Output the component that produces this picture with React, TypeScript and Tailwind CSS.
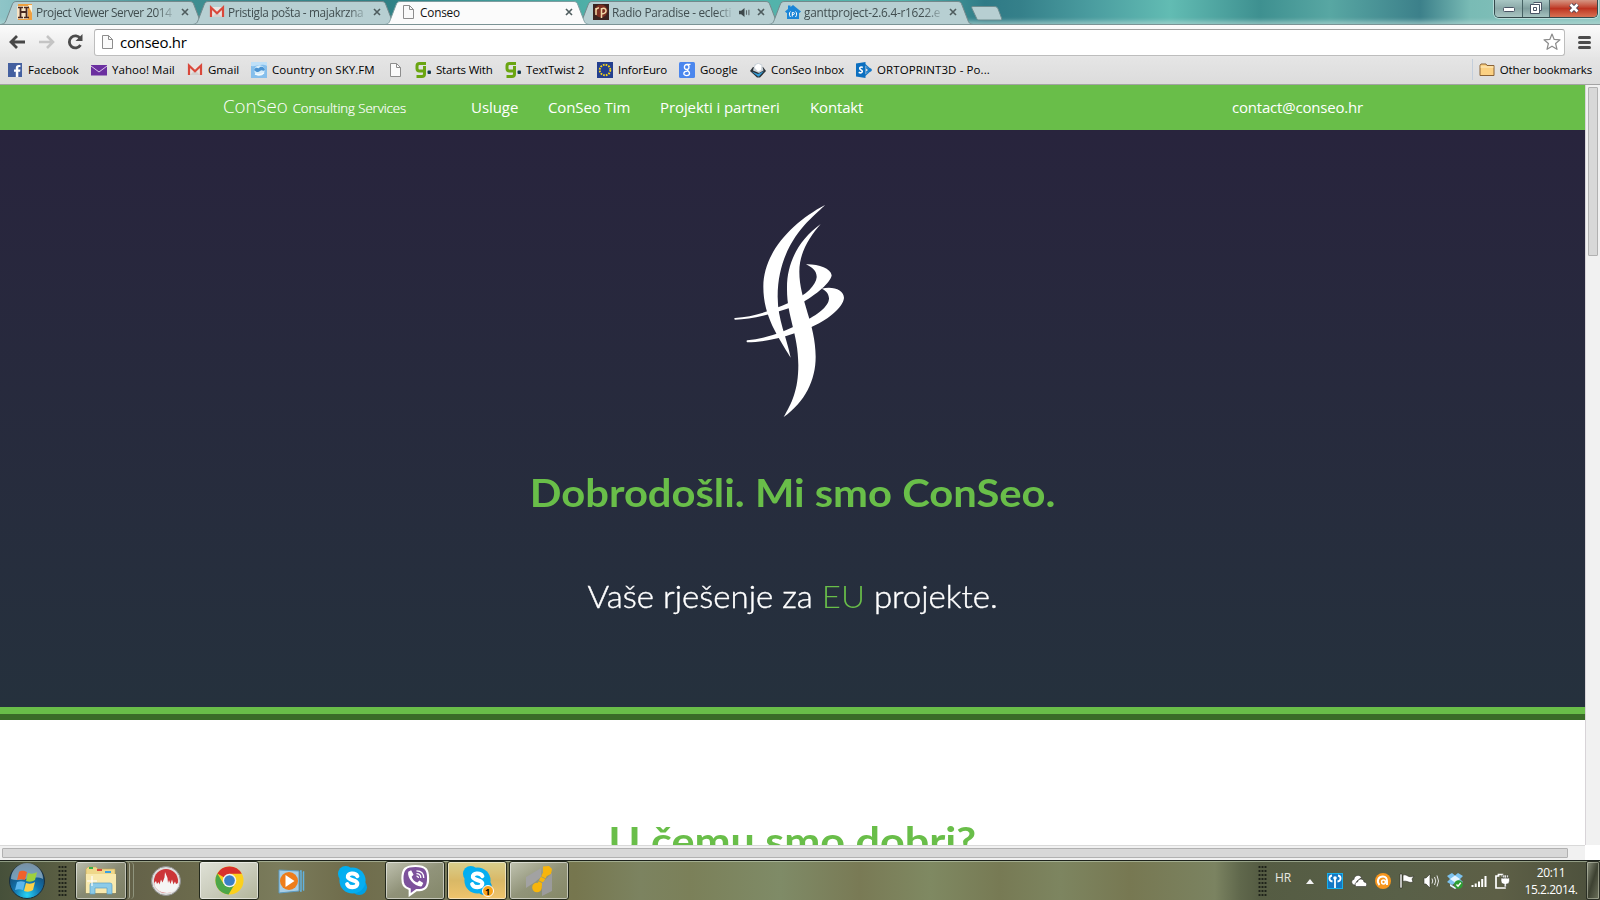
import type { ReactNode } from "react";

const UI = "font-['Open_Sans','Noto_Sans',sans-serif]";

/* ---------- small icons ---------- */

const PageIcon = ({ className = "" }: { className?: string }) => (
  <svg viewBox="0 0 16 16" className={`h-4 w-4 shrink-0 ${className}`}>
    <path d="M2.5 1.5h6l4 4v9h-10z" fill="#fafafa" stroke="#8d8d8d" />
    <path d="M8.500 1.500v4h4" fill="none" stroke="#8d8d8d" />
  </svg>
);

const GmailIcon = () => (
  <svg viewBox="0 0 16 16" className="h-4 w-4 shrink-0">
    <path d="M2 3h12v10H2z" fill="#e9e4e2" />
    <path d="M3 13l5-5 5 5z" fill="#d4d0ce" />
    <path d="M2 13V3.500l6 5.700 6-5.700V13" fill="none" stroke="#d9483b" strokeWidth="2.200" />
  </svg>
);

const ProjectIcon = () => (
  <svg viewBox="0 0 16 16" className="h-4 w-4 shrink-0">
    <rect x="1" width="14" height="16" fill="#f0a040" />
    <path d="M0 2h11v13H0z" fill="#f7e3c5" />
    <path d="M11 1l4 0v8z" fill="#fff3d8" />
    <path d="M1 3.500h5M7 3.500h5M1 13.500h5M7 13.500h5" stroke="#4a2a22" strokeWidth="1.300" />
    <path d="M3.500 3v10M9.500 3v10M3.500 8h6" stroke="#4a2a22" strokeWidth="1.800" fill="none" />
  </svg>
);

const RadioIcon = () => (
  <svg viewBox="0 0 16 16" className="h-4 w-4 shrink-0">
    <rect width="16" height="16" fill="#3a2320" />
    <circle cx="8" cy="7" r="6.500" fill="#7c2f22" />
    <path d="M3 11V4M3 6c.5-2 1.500-2.300 3-2M8.500 14V4M8.500 5c5-3 7 5 0 5" fill="none" stroke="#f0d9a8" strokeWidth="1.500" />
  </svg>
);

const GanttHouse = () => (
  <svg viewBox="0 0 16 16" className="h-4 w-4 shrink-0">
    <path d="M0 7.500L3 5V1.500h2.500V3L8 1l8 6.500-1.500 1.500-.5-.3V15H2V8.700L1.500 9z" fill="#1a86d8" />
    <path d="M5.500 7.500c-1.500 1-1.500 4 0 5.500M10.500 7.500c1.500 1 1.500 4 0 5.500M7.300 12.500V8.500h1c1.500 0 1.500 2 0 2h-1" fill="none" stroke="#fff" strokeWidth="1" />
  </svg>
);

const FacebookIcon = () => (
  <svg viewBox="0 0 16 16" className="h-4 w-4 shrink-0">
    <rect x="1" y="1" width="14" height="14" fill="#4460a0" />
    <path d="M8.800 15V9.700H7V7.400h1.800V6c0-2 1.100-3.100 3-3.100h1.600v2.200h-1.100c-.8 0-1 .4-1 1.100v1.200h2.100l-.3 2.300h-1.800V15z" fill="#fff" />
  </svg>
);

const YahooIcon = () => (
  <svg viewBox="0 0 16 16" className="h-4 w-4 shrink-0">
    <path d="M0 3h16v10.500H0z" fill="#6b2fa0" />
    <path d="M0 4l8 6 8-6" fill="none" stroke="#d9c6ea" />
  </svg>
);

const SkyIcon = () => (
  <svg viewBox="0 0 16 16" className="h-4 w-4 shrink-0">
    <rect width="16" height="16" fill="#86bfec" />
    <path d="M0 0h16v4C10 1 5 5 0 4z" fill="#bfe0f8" />
    <circle cx="8.500" cy="8.500" r="5.200" fill="#d5ecfa" />
    <path d="M3 8c2-4 4-1 5-2s3-2 5 0l1 2c-2 2-3-1-5 1s-4 1-6-1z" fill="#4b93d2" />
    <path d="M4 12c3 1 6 1 9-1" stroke="#f4fbff" strokeWidth="1.500" fill="none" />
  </svg>
);

const GameIcon = () => (
  <svg viewBox="0 0 16 16" className="h-4 w-4 shrink-0">
    <path d="M11 1.500H4.500C2.500 1.500 2 2.500 2 4v2.500C2 8.500 3 9 4.500 9H9" fill="none" stroke="#6aa512" strokeWidth="3" />
    <path d="M9.500 4V12c0 1.500-1 2.500-2.500 2.500H1.500" fill="none" stroke="#6aa512" strokeWidth="3" />
    <rect x="12.500" y="8.500" width="3.500" height="3.500" rx="1" fill="#173a52" />
  </svg>
);

const EuIcon = () => (
  <svg viewBox="0 0 16 16" className="h-4 w-4 shrink-0">
    <rect width="16" height="16" fill="#233f8f" />
    <circle cx="8" cy="8" r="5.300" fill="none" stroke="#f2d21b" strokeWidth="1.900" strokeDasharray="1.700 1.075" />
  </svg>
);

const GoogleIcon = () => (
  <svg viewBox="0 0 16 16" className="h-4 w-4 shrink-0">
    <rect width="16" height="16" rx="1.500" fill="#4a86ee" />
    <ellipse cx="7.700" cy="5" rx="2.300" ry="2.500" fill="none" stroke="#fff" strokeWidth="1.300" />
    <path d="M8 2.300h3.500M9 7.200c-2 1.300 1.500 1.800 1.500 4 0 3.200-5.700 3-5.700.3 0-1.700 2-2.200 3.700-2.300" fill="none" stroke="#fff" strokeWidth="1.300" />
  </svg>
);

const InboxIcon = () => (
  <svg viewBox="0 0 16 16" className="h-4 w-4 shrink-0">
    <path d="M0 9l3-4h10l3 4-6 6.500H7z" fill="#2b3238" />
    <path d="M1.500 9.500L8 12l6-3-5 5.500H8z" fill="#2f9bd8" />
    <path d="M3 8.500l1.500-6L8 .8l4 1.700 1.500 6L9 11z" fill="#c9d1d8" />
    <path d="M4.500 5.500L6 2.700l2.500-1 3 1.800-.5 4.500-3 1.500z" fill="#fff" />
  </svg>
);

const SharepointIcon = () => (
  <svg viewBox="0 0 16 16" className="h-4 w-4 shrink-0">
    <path d="M9 2.500l6 5.500-6 5.500M10 5.500L13 8l-3 2.500" fill="none" stroke="#1579c8" strokeWidth="1.300" />
    <circle cx="14" cy="8" r="1.700" fill="#1579c8" />
    <path d="M0 1.500L9.500 0v16L0 14.500z" fill="#0b6fc0" />
    <path d="M6.800 5.500C4.500 4 2.500 6.500 4.700 7.700c3 1.300 1.300 4.300-2 2.500" fill="none" stroke="#fff" strokeWidth="1.600" />
  </svg>
);

const FolderIcon = () => (
  <svg viewBox="0 0 16 16" className="h-4 w-4 shrink-0">
    <path d="M1 13.500v-10l1-1.500h5l1 1.500h7v10z" fill="#fbd183" stroke="#8a6235" />
    <path d="M1.500 5h13" stroke="#ffeec4" />
  </svg>
);

const CloseX = () => (
  <svg viewBox="0 0 8 8" className="h-2 w-2 shrink-0">
    <path d="M1 1l6 6M7 1L1 7" stroke="#4e5c5e" strokeWidth="1.600" />
  </svg>
);

const Speaker = () => (
  <svg viewBox="0 0 10 8" className="mr-[7px] h-[9px] w-[11px] shrink-0">
    <path d="M0 2.500h2L5 0v8L2 5.500H0z" fill="#3d484a" />
    <path d="M6.800 2v4M9 1.500v5" stroke="#5d696b" />
  </svg>
);

/* ---------- browser chrome ---------- */

type TabProps = { icon: ReactNode; title: string; active?: boolean; audio?: boolean; track: string };

const Tab = ({ icon, title, active, audio, track }: TabProps) => (
  <div className={`relative -mr-[14px] flex h-[25px] w-[206px] shrink-0 items-center pl-[17px] pr-[17px] ${active ? "z-10" : ""}`}>
    <svg viewBox="0 0 206 25" className="absolute inset-0 h-[25px] w-[206px]">
      <path
        d="M1 24.500C5 24 5.500 22 7 18L12 5C13.200 2 14 1.500 17 1.500H189C192 1.500 193 2 194 5L199 18C200.500 22 201 24 205 24.500"
        fill={active ? "#fbfbfb" : "#b7cfd2"}
        stroke={active ? "#7e9da0" : "#73898c"}
      />
      {active && <path d="M1 25h205" stroke="#fbfbfb" strokeWidth="1.500" />}
    </svg>
    <div className="relative flex w-full items-center pb-px">
      {icon}
      <span
        className={`ml-[3px] flex-1 whitespace-nowrap text-[11.8px] leading-[17px] ${track} ${
          active ? "text-[#111]" : "text-[#414e50] [mask-image:linear-gradient(to_right,black_87%,rgba(0,0,0,0.15))]"
        } mr-[7px]`}
      >
        {title}
      </span>
      {audio && <Speaker />}
      <CloseX />
    </div>
  </div>
);

const WindowButtons = () => (
  <div className="ml-auto mr-[2px] flex h-[18px] shrink-0 overflow-hidden rounded-b-[5px] border border-t-0 border-[#34494c] shadow-[0_0_0_1px_rgba(220,240,240,0.6)]">
    <div className="flex w-[28px] items-center justify-center border-r border-[#466264] bg-linear-to-b from-[#a8c6c4] via-[#8ba9a8] via-50% to-[#aac5c2]">
      <svg viewBox="0 0 12 12" className="h-3 w-3"><rect x=".5" y="4.500" width="11" height="4" rx="1" fill="#fff" stroke="#4a5566" /></svg>
    </div>
    <div className="flex w-[27px] items-center justify-center border-r border-[#466264] bg-linear-to-b from-[#a8c6c4] via-[#809e9e] via-50% to-[#a5c2bf] pb-[2px]">
      <svg viewBox="0 0 12 12" className="h-3 w-3">
        <path d="M3.500.5h8v8h-2" fill="#fff" stroke="#4a5566" />
        <path d="M.5 2.500h9v9h-9zM3.500 5.500h3v3h-3z" fill="#fff" stroke="#4a5566" />
      </svg>
    </div>
    <div className="flex w-[47px] items-center justify-center bg-linear-to-b from-[#d59583] via-[#bd3320] via-50% to-[#d77052] pb-[2px]">
      <svg viewBox="0 0 12 12" className="h-3 w-3">
        <path d="M2.500 2.500l7 7M9.500 2.500l-7 7" stroke="#4b4454" strokeWidth="4.500" />
        <path d="M2.500 2.500l7 7M9.500 2.500l-7 7" stroke="#fff" strokeWidth="2.600" />
      </svg>
    </div>
  </div>
);

const TabStrip = () => (
  <div className="flex h-[25px] overflow-hidden border-b border-[#7b9395] bg-[linear-gradient(90deg,#8fc5c8_0px,#3f8f92_180px,#2f7f84_380px,#4fb0a8_590px,#55b5ad_900px,#2f7a86_985px,#35808a_1020px,#4a9c9f_1090px,#62bcb3_1170px,#3e9090_1260px,#58a7a3_1330px,#3c808a_1420px,#79bbb5_1470px,#8ec7c0_1600px)] shadow-[inset_0_-6px_4px_-3px_rgba(180,215,212,0.65)]">
    <Tab icon={<ProjectIcon />} title="Project Viewer Server 2014" track="tracking-[-0.45px]" />
    <Tab icon={<GmailIcon />} title="Pristigla pošta - majakrzna" track="tracking-[-0.35px]" />
    <Tab icon={<PageIcon />} title="Conseo" active track="tracking-[-0.2px]" />
    <Tab icon={<RadioIcon />} title="Radio Paradise - eclecti" audio track="tracking-[-0.3px]" />
    <Tab icon={<GanttHouse />} title="ganttproject-2.6.4-r1622.e" track="tracking-[-0.25px]" />
    <svg viewBox="0 0 32 16" className="ml-[11px] mt-[5px] h-4 w-8 shrink-0">
      <path d="M1 1.500h22c3 0 3.500 1 4.500 3.500l3 8c.5 1.500 0 2-1 2H9c-2.500 0-3-.5-4-3L1 3.500c-.5-1 0-2 0-2z" fill="#b7cfd2" stroke="#6d8c8f" />
    </svg>
    <WindowButtons />
  </div>
);

const Toolbar = () => (
  <div className="flex h-[32px] items-center bg-linear-to-b from-[#fbfbfb] to-[#e6e6e6] pl-[9px]">
    <svg viewBox="0 0 16 14" className="mt-[2px] h-[14px] w-4">
      <path d="M8 1L2 7l6 6M2 7h14" fill="none" stroke="#474747" strokeWidth="2.800" />
    </svg>
    <svg viewBox="0 0 16 14" className="ml-[14px] mt-[2px] h-[14px] w-4">
      <path d="M8 1l6 6-6 6M14 7H0" fill="none" stroke="#c4c4c4" strokeWidth="2.600" />
    </svg>
    <svg viewBox="0 0 16 16" className="ml-[12px] mt-[2px] h-4 w-4">
      <path d="M13.300 4.500A6 6 0 1 0 13.500 11" fill="none" stroke="#4b4b4b" strokeWidth="2.800" />
      <path d="M15.500 0v7h-7z" fill="#4b4b4b" />
    </svg>
    <div className="ml-[11px] mt-[2px] flex h-[27px] w-[1471px] items-center rounded-[3px] border border-[#bdbdbd] border-t-[#a0a0a0] bg-white pl-[5px] pr-[3px]">
      <PageIcon />
      <span className="ml-[4px] flex-1 text-[15px] leading-5 tracking-[-0.3px] text-black">conseo.hr</span>
      <svg viewBox="0 0 18 18" className="h-[18px] w-[18px]">
        <path d="M9 1l2.200 5.400 5.800.4-4.400 3.700 1.400 5.800L9 13.200l-5 3.100 1.400-5.800L1 6.800l5.800-.4z" fill="#fff" stroke="#8b8b8b" strokeWidth="1.200" strokeLinejoin="round" />
      </svg>
    </div>
    <div className="ml-[13px] mt-[2px] flex flex-col gap-[2px]">
      <div className="h-[3px] w-[13px] rounded-sm bg-[#4c4c4c]" />
      <div className="h-[3px] w-[13px] rounded-sm bg-[#4c4c4c]" />
      <div className="h-[3px] w-[13px] rounded-sm bg-[#4c4c4c]" />
    </div>
  </div>
);

const bookmarks: { icon: ReactNode; label: string; box: string }[] = [
  { icon: <FacebookIcon />, label: "Facebook", box: "w-[84px] tracking-[-0.05px]" },
  { icon: <YahooIcon />, label: "Yahoo! Mail", box: "w-[96px] tracking-[0.05px]" },
  { icon: <GmailIcon />, label: "Gmail", box: "w-[64px] tracking-[0px]" },
  { icon: <SkyIcon />, label: "Country on SKY.FM", box: "w-[137px] tracking-[0.05px]" },
  { icon: <PageIcon />, label: "", box: "w-[27px]" },
  { icon: <GameIcon />, label: "Starts With", box: "w-[90px] tracking-[-0.2px]" },
  { icon: <GameIcon />, label: "TextTwist 2", box: "w-[92px] tracking-[-0.2px]" },
  { icon: <EuIcon />, label: "InforEuro", box: "w-[82px] tracking-[-0.2px]" },
  { icon: <GoogleIcon />, label: "Google", box: "w-[71px] tracking-[0px]" },
  { icon: <InboxIcon />, label: "ConSeo Inbox", box: "w-[106px] tracking-[-0.1px]" },
  { icon: <SharepointIcon />, label: "ORTOPRINT3D - Po...", box: "w-[150px] tracking-[0.1px]" },
];

const BookmarksBar = () => (
  <div className="flex h-[28px] items-center border-b border-[#a3a3a3] bg-linear-to-b from-[#e5e5e5] to-[#dcdcdc] pb-[2px] pl-[7px] text-[11.5px] text-black">
    {bookmarks.map((b, i) => (
      <div key={i} className={`flex shrink-0 items-center gap-[5px] whitespace-nowrap ${b.box}`}>
        {b.icon}
        <span>{b.label}</span>
      </div>
    ))}
    <div className="ml-auto mr-[8px] flex items-center gap-[5px] border-l border-[#c3cedb] py-[2px] pl-[6px] tracking-[-0.15px]">
      <FolderIcon />
      <span>Other bookmarks</span>
    </div>
  </div>
);

/* ---------- web page ---------- */

const ConseoLogo = () => (
  <svg viewBox="0 0 480 720" className="mr-[5px] h-[240px] w-[160px]" fill="#fff">
    <path d="M345 45C318 75 203 150 203 320C203 390 230 440 242 503C205 440 160 380 160 290C160 185 250 95 345 45Z" />
    <path d="M332 102C300 140 268 185 268 245C268 330 317 400 317 500C317 570 285 635 221 681C245 640 265 600 265 525C265 430 230 380 231 295C230 220 265 150 332 102Z" />
    <path d="M288 223C325 222 362 235 365 256C362 278 320 314 270 342C210 366 130 389 75 389C72 389 72 384 75 384C130 380 180 364 240 337C290 315 318 285 320 262C321 245 308 232 288 223Z" />
    <path d="M335 296C370 288 402 300 402 324C398 355 350 392 300 413C240 437 170 457 112 457C109 457 109 451 112 451C170 446 230 422 280 396C320 376 357 350 357 325C356 308 345 300 335 296Z" />
  </svg>
);

const SiteNav = () => (
  <nav className="flex h-[45px] shrink-0 items-center whitespace-nowrap bg-[#69be49] pl-[223px] text-[15px] tracking-[-0.05px] text-white">
    <div className="flex w-[248px] items-baseline gap-[5px] pb-[2px] font-light">
      <span className="text-[18.7px]">ConSeo</span>
      <span className="text-[13.2px] [-webkit-text-stroke:0.2px]">Consulting Services</span>
    </div>
    <a className="w-[77px]">Usluge</a>
    <a className="w-[112px] tracking-[-0.1px]">ConSeo Tim</a>
    <a className="w-[150px] tracking-[-0.1px]">Projekti i partneri</a>
    <a className="w-[422px] tracking-[-0.15px]">Kontakt</a>
    <a className="tracking-[-0.2px]">contact@conseo.hr</a>
  </nav>
);

const Site = () => (
  <div className="flex h-[760px] w-[1585px] flex-col overflow-hidden bg-white">
    <SiteNav />
    <header className="flex h-[577px] shrink-0 flex-col items-center bg-linear-to-b from-[#28243d] to-[#25313d] pt-[60px] font-['Century_Gothic','Lato',sans-serif]">
      <ConseoLogo />
      <h1 className="mt-[37px] origin-center scale-x-[1.07] whitespace-nowrap text-[39px] font-bold leading-[50px] text-[#69be49]">
        Dobrodošli. Mi smo ConSeo.
      </h1>
      <p className="mt-[59px] origin-center scale-x-[1.065] whitespace-nowrap text-[31px] font-light leading-[40px] text-white [-webkit-text-stroke:0.4px]">
        Vaše rješenje za <span className="text-[#69be49] [-webkit-text-stroke:0px]">EU</span> projekte.
      </p>
    </header>
    <div className="h-[7px] shrink-0 bg-[#69be49]" />
    <div className="h-[6px] shrink-0 bg-[#3a6c28]" />
    <section className="flex justify-center pt-[95px] font-['Century_Gothic','Lato',sans-serif]">
      <h2 className="origin-center scale-x-[1.105] whitespace-nowrap text-[39px] font-bold leading-[50px] text-[#69be49]">U čemu smo dobri?</h2>
    </section>
  </div>
);

/* ---------- taskbar ---------- */

const Grip = () => (
  <div className="h-[31px] w-[9px] shrink-0 bg-[radial-gradient(circle,#1e2219_0.9px,transparent_1.3px)] bg-[size:3px_4px]" />
);

const StartOrb = () => (
  <svg viewBox="0 0 38 38" className="h-[38px] w-[38px] shrink-0">
    <defs>
      <radialGradient id="orb" cx=".5" cy=".9" r=".85">
        <stop offset="0" stopColor="#27d3f4" />
        <stop offset=".45" stopColor="#1273ad" />
        <stop offset="1" stopColor="#173c60" />
      </radialGradient>
    </defs>
    <circle cx="19" cy="19" r="17.500" fill="url(#orb)" stroke="#1b2f3c" />
    <path d="M3 17A16 16 0 0 1 35 17C26 12 12 21 3 17Z" fill="#b9cfdc" opacity=".6" />
    <path d="M11 10c3-2 5-1 8 0l-2 8c-3-1-5-1-8 0z" fill="#f0622b" />
    <path d="M20 11c3 1 6 1 9-1l-2 8c-3 2-6 2-9 1z" fill="#9ed03d" />
    <path d="M9 20c3-1 5-1 8 0l-2 8c-3-1-5-1-8 0z" fill="#5bb6ee" />
    <path d="M18 21c3 1 6 1 9-1l-2 8c-3 2-6 2-9 1z" fill="#fcd04a" />
  </svg>
);

const ExplorerIcon = () => (
  <svg viewBox="0 0 32 30" className="h-[30px] w-8">
    <path d="M1 3l2-2h8l2 2h17v24H1z" fill="#efd88a" stroke="#c8a850" strokeWidth=".6" />
    <rect x="4" y="1" width="4" height="2" fill="#35b04a" />
    <rect x="12" y="3" width="5" height="2" fill="#d84a3a" />
    <rect x="20" y="5" width="6" height="2" fill="#3aa0e0" />
    <path d="M1 8h30v19H1z" fill="#f8e9ae" />
    <path d="M5 28V19q0-2 2-2h18q2 0 2 2v9h-5v-6H10v6z" fill="#8ccbe8" stroke="#5a9fc4" strokeWidth=".7" />
    <path d="M7 10v10M2 15h10" stroke="#fff" strokeWidth="1.200" />
  </svg>
);

const FlameIcon = () => (
  <svg viewBox="0 0 32 32" className="h-8 w-8">
    <circle cx="16" cy="16" r="14.500" fill="#dedede" stroke="#8f8f8f" />
    <circle cx="16" cy="16" r="12" fill="#cc3438" />
    <path d="M4.300 18l1.700-2 1 3 1.500-2 1 2.500 1.500-5 1.500 3 2-5 .5-5.500 2.500 6 .5 5 1-3 1.500 4 1.500-4.500 1.500 5 1.500-3 1 2.500 2.500-1c0 6-5 10-11.500 10S4.300 24 4.300 18z" fill="#f5f5f5" />
  </svg>
);

const ChromeIcon = () => (
  <svg viewBox="0 0 32 32" className="h-[31px] w-[31px]">
    <circle cx="16" cy="16" r="14.500" fill="#fbd01d" />
    <path d="M16 16L3.400 8.800A14.500 14.500 0 0 1 28.600 9H16z" fill="#d8302c" />
    <path d="M3.400 8.800A14.500 14.500 0 0 0 15 30.500L21.500 19.500 10 19.500z" fill="#4da648" />
    <circle cx="16" cy="16" r="7" fill="#f2f2f2" />
    <circle cx="16" cy="16" r="5.500" fill="#3a7fc6" />
  </svg>
);

const PlayerIcon = () => (
  <svg viewBox="0 0 28 28" className="h-7 w-7">
    <path d="M2 3l20 1v20L2 26z" fill="#a9cfe6" stroke="#5d9cc2" />
    <path d="M23 4h1v20h-1M26 5h.5v18H26" stroke="#62b2e0" fill="none" strokeWidth="1.500" />
    <circle cx="12" cy="14" r="9" fill="#ee7d1b" />
    <path d="M8.500 8l9 6-9 6z" fill="#fff" />
  </svg>
);

const SkypeIcon = ({ badge }: { badge?: boolean }) => (
  <div className="relative h-[31px] w-[31px]">
    <svg viewBox="0 0 32 32" className="h-[31px] w-[31px]">
      <circle cx="9" cy="9" r="8" fill="#00aff0" />
      <circle cx="23" cy="23" r="8" fill="#00a0e4" />
      <circle cx="16" cy="16" r="13.500" fill="#06aef0" />
      <path d="M21 11.500C19 7.500 10.500 8 11.200 12.500c1 4 10.300 2.500 9.800 7-.5 4.500-9 4.300-10.500.3" fill="none" stroke="#fff" strokeWidth="4.200" strokeLinecap="round" />
    </svg>
    {badge && (
      <span className="absolute -bottom-[1px] -right-[1px] flex h-[12px] w-[12px] items-center justify-center rounded-full border border-white bg-[#f8a31a] text-[9px] font-bold leading-none text-black">
        1
      </span>
    )}
  </div>
);

const ViberIcon = () => (
  <svg viewBox="0 0 32 34" className="h-[33px] w-[31px]">
    <path d="M16 2c11 0 13 4 13 13s-3 12-12 12l-7 5v-6C4 24 2.500 21 2.500 15 2.500 5 6 2 16 2z" fill="#7d529c" stroke="#fff" strokeWidth="2.200" />
    <path d="M8.500 8l3-1.500L14 11l-2 2c1 3 3 5 6 6l2-2 4 2.500-1.500 3.500C16 24 7 15 8.500 8z" fill="#fff" />
    <path d="M17 7c5 0 7.500 3 7.500 7.500M17 10c3 0 4.500 1.500 4.500 4.500M17 12.500q2 0 2 2" fill="none" stroke="#fff" strokeWidth="1.300" />
  </svg>
);

const GanttIcon = () => (
  <svg viewBox="0 0 30 32" className="h-8 w-[30px]">
    <path d="M2 12L17 3v9l-6 5-9 6z" fill="#a2a2a2" />
    <path d="M22.500 6L14 23" stroke="#f7b50c" strokeWidth="5" strokeDasharray="7 .8 4 .8 7" />
    <path d="M19 1.500l6-.5 3 3-1 5-4 2-4-4z" fill="#f7b50c" />
    <circle cx="13" cy="22.500" r="4.800" fill="#f7b50c" />
    <path d="M18 18l10-10v18l-10 5z" fill="#9b9b9b" />
  </svg>
);

const TaskButton = ({ children, look }: { children: ReactNode; look: string }) => (
  <div className={`flex h-[39px] shrink-0 items-center justify-center rounded-[3px] border border-[#23291c] shadow-[inset_0_0_0_1px_rgba(255,255,255,0.5)] ${look}`}>
    {children}
  </div>
);

const trayIcons: ReactNode[] = [
  <svg key="net" viewBox="0 0 16 16" className="h-4 w-4">
    <rect x=".5" y=".5" width="15" height="15" fill="#1478c4" stroke="#18b0ea" />
    <circle cx="8" cy="5" r="1.800" fill="#fff" />
    <path d="M8 6v9M5.500 8.500C1.500 8 1.500 3 5 2.500M10.500 8.500c4-.5 4-5.500.5-6" fill="none" stroke="#fff" strokeWidth="1.800" />
  </svg>,
  <svg key="cloud" viewBox="0 0 16 16" className="h-4 w-4">
    <path d="M1.500 11C0 9 1 6.500 3 6.500 3 2 9 1 10.500 4.500L6 8l-2 4H3z" fill="#fff" stroke="#333" strokeWidth=".5" />
    <path d="M5.500 13.500c-2.300-1-1.500-4.500 1-4.500C7.500 5 12.500 5 13 9c3 0 3.500 3.500 1.500 4.500z" fill="#fff" stroke="#333" strokeWidth=".6" />
  </svg>,
  <svg key="avast" viewBox="0 0 16 16" className="h-4 w-4">
    <circle cx="8" cy="8" r="8" fill="#f8961d" />
    <path d="M4.500 12C1 8 3.500 3.500 8 3.500c3 0 4 2 4 4.500v4" fill="none" stroke="#fff" strokeWidth="1.900" />
    <circle cx="8.500" cy="9" r="1.900" fill="none" stroke="#fff" strokeWidth="1.500" />
  </svg>,
  <svg key="flag" viewBox="0 0 16 16" className="h-4 w-4">
    <path d="M1 1h2v14H1zM4 2c3-1 4 1 6 1.500s3 0 5-.5l-2 3 1 3c-3 1-4 0-6-.5S6 8 4 8.500z" fill="#fff" stroke="#2c2c24" strokeWidth=".6" />
  </svg>,
  <svg key="vol" viewBox="0 0 16 16" className="h-4 w-4">
    <path d="M1 5h2l4-4v14l-4-4H1z" fill="#fff" stroke="#33352c" strokeWidth=".6" />
    <path d="M9 5.500q1.500 2.500 0 5M11.500 4q2.500 4 0 8M14 2.500q3 5.500 0 11" fill="none" stroke="#e8e8e8" />
  </svg>,
  <svg key="dropbox" viewBox="0 0 16 16" className="h-4 w-4">
    <path d="M0 3l5-3 3 2.500L11 0l5 3-3 3 3 3-5 3-3-2-3 2-5-3 3-3z" fill="#7cc2ee" />
    <path d="M3 6l5-3.500L13 6 8 9.500zM3 11l5 3 5-3v2l-5 3-5-3z" fill="#e4f4ff" />
    <circle cx="11.500" cy="11.500" r="4.300" fill="#2d9e33" />
    <path d="M9.500 11.500l1.500 1.700 2.800-3.500" stroke="#fff" strokeWidth="1.400" fill="none" />
  </svg>,
  <svg key="signal" viewBox="0 0 16 16" className="h-4 w-4">
    <path d="M.5 12h2v2h-2zM3.700 10.500h2V14h-2zM7 8.500h2V14H7zM10.200 6h2v8h-2zM13.500 3h2v11h-2z" fill="#fff" />
  </svg>,
  <svg key="power" viewBox="0 0 16 16" className="h-4 w-4">
    <path d="M1 3h2.500V1.500h4V3H10v12H1z" fill="none" stroke="#fff" strokeWidth="1.700" />
    <path d="M6 5h8.500v2.500c0 3-2 3.500-3.200 3.500v3h-2v-3C8 11 6 10.500 6 7.500zM7.500 2h1.700v3H7.500zM11.500 2h1.700v3h-1.700z" fill="#fff" stroke="#44463a" strokeWidth=".6" />
  </svg>,
];

const glass = "bg-linear-to-br from-[#d3d6c8]/80 via-[#a3a792]/60 to-[#8e9376]/60";

const Taskbar = () => (
  <div className="flex h-[40px] shrink-0 items-center overflow-hidden border-t border-[#1d221c] bg-[linear-gradient(90deg,#46503a_0px,#5a5e43_60px,#646249_130px,#6b6a4c_190px,#7b7c5c_280px,#6f6c4b_350px,#77795a_460px,#76764e_575px,#7c8360_640px,#7b8059_690px,#7f8b67_780px,#797a55_860px,#7f8962_930px,#777a54_1000px,#7d8560_1060px,#777852_1130px,#7b8361_1215px,#60684c_1240px,#555c43_1260px,#596048_1400px,#5d5f46_1500px,#4c503c_1600px)] pl-[8px] shadow-[inset_0_1px_0_rgba(190,205,180,0.6)]">
    <StartOrb />
    <div className="ml-[12px] flex"><Grip /></div>
    <TaskButton look={`ml-[8px] w-[52px] ${glass}`}><ExplorerIcon /></TaskButton>
    <div className="h-[37px] w-[3px] rounded-r border-r border-[#a9ad99]" />
    <div className="h-[37px] w-[4px] rounded-r border-r border-[#8f947d]" />
    <div className="ml-[16px] w-8"><FlameIcon /></div>
    <TaskButton look="ml-[17px] w-[60px] bg-linear-to-br from-[#dfe1d6] via-[#cbcdbd] to-[#b2b599]"><ChromeIcon /></TaskButton>
    <div className="ml-[18px] w-[28px]"><PlayerIcon /></div>
    <div className="ml-[32px] w-[31px]"><SkypeIcon /></div>
    <TaskButton look={`ml-[17px] w-[60px] ${glass}`}><ViberIcon /></TaskButton>
    <TaskButton look="ml-[2px] w-[60px] bg-linear-to-b from-[#d9cf8c] via-[#d9b866] to-[#efc46c]"><SkypeIcon badge /></TaskButton>
    <TaskButton look={`ml-[2px] w-[60px] ${glass}`}><GanttIcon /></TaskButton>
    <div className="ml-auto flex"><Grip /></div>
    <span className="-mt-[6px] ml-[8px] w-[31px] text-[12px] leading-none text-[#e8e8e2]">HR</span>
    <svg viewBox="0 0 8 5" className="mr-[13px] mt-[2px] h-[5px] w-2"><path d="M0 5l4-5 4 5z" fill="#f3f3f3" /></svg>
    <div className="flex items-center gap-[8px] pt-[1px]">{trayIcons}</div>
    <div className="ml-[12px] flex w-[56px] flex-col items-center whitespace-nowrap text-[12px] leading-[17px] tracking-[-0.45px] text-white">
      <span>20:11</span>
      <span>15.2.2014.</span>
    </div>
    <div className="ml-[7px] h-[39px] w-[14px] shrink-0 rounded-[2px] border border-[#2a2e24] bg-linear-to-br from-[#8b907d] via-[#3e4232] to-[#6e725c] shadow-[inset_0_0_0_1px_rgba(220,225,205,0.45)]" />
  </div>
);

export default function App() {
  return (
    <div className={`flex h-[900px] w-[1600px] flex-col overflow-hidden bg-white ${UI}`}>
      <TabStrip />
      <Toolbar />
      <BookmarksBar />
      <div className="flex h-[760px] shrink-0">
        <Site />
        <div className="flex w-[15px] justify-center border-l border-[#d8d4d8] bg-[#f1f1f1] pt-[2px]">
          <div className="h-[169px] w-[10px] rounded-[1px] border border-[#b1b1b1] bg-[#d8d8d8]" />
        </div>
      </div>
      <div className="flex h-[15px] shrink-0">
        <div className="flex w-[1585px] items-center border-t border-[#d9d9d9] bg-[#f1f1f1] pl-[2px]">
          <div className="h-[10px] w-[1566px] rounded-[1px] border border-[#b1b1b1] bg-[#d8d8d8]" />
        </div>
      </div>
      <Taskbar />
    </div>
  );
}
